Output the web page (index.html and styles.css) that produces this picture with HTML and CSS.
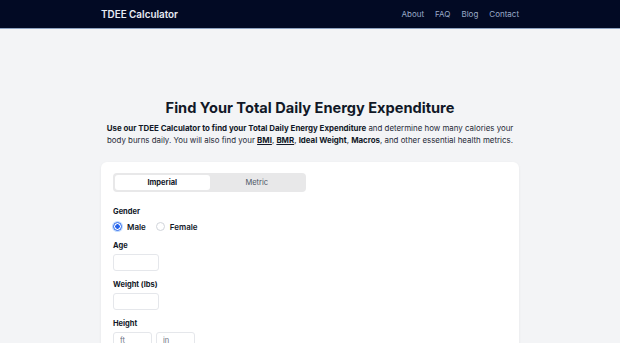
FILE: index.html
```html
<!doctype html>
<html lang="en">
  <head>
    <meta charset="UTF-8" />
    <meta name="viewport" content="width=device-width, initial-scale=1.0" />
    <title>TDEE Calculator</title>
    <link rel="stylesheet" href="styles.css">
  </head>
  <body>
    <nav class="navbar">
      <div class="nav-inner">
        <a class="brand" href="#">TDEE Calculator</a>
        <div class="nav-links">
          <a href="#">About</a>
          <a href="#">FAQ</a>
          <a href="#">Blog</a>
          <a href="#">Contact</a>
        </div>
      </div>
    </nav>

    <main class="container">
      <h1>Find Your Total Daily Energy Expenditure</h1>
      <p class="intro">
        <strong>Use our TDEE Calculator to find your Total Daily Energy Expenditure</strong>
        and determine how many calories your body burns daily. You will also find your
        <strong><u>BMI</u></strong>, <strong><u>BMR</u></strong>, <strong>Ideal Weight</strong>,
        <strong>Macros</strong>, and other essential health metrics.
      </p>

      <div class="card">
        <div class="units">
          <button class="unit active">Imperial</button>
          <button class="unit">Metric</button>
        </div>

        <div class="form-group first">
          <label>Gender</label>
          <div class="radios">
            <label class="radio"><span class="dot checked"></span>Male</label>
            <label class="radio"><span class="dot"></span>Female</label>
          </div>
        </div>

        <div class="form-group">
          <label for="age">Age</label>
          <input type="text" id="age" />
        </div>

        <div class="form-group">
          <label for="weight">Weight (lbs)</label>
          <input type="text" id="weight" />
        </div>

        <div class="form-group">
          <label>Height</label>
          <div class="height-row">
            <input type="text" class="small" placeholder="ft" />
            <input type="text" class="small" placeholder="in" />
          </div>
        </div>
      </div>
    </main>
  </body>
</html>
```

FILE: styles.css
```css
body {
  margin: 0;
  font-family: Inter, "Liberation Sans", sans-serif;
  background: #f3f4f6;
  color: #111827;
}
.navbar {
  background: #020a24;
  height: 28px;
  border-bottom: 1px solid #8da2c0;
}
.nav-inner {
  width: 418px;
  margin: 0 auto;
  height: 28px;
  display: flex;
  align-items: center;
  justify-content: space-between;
}
.brand {
  color: #e8ecf4;
  font-size: 9.9px;
  font-weight: 600;
  text-decoration: none;
}
.nav-links {
  display: flex;
  gap: 11px;
}
.nav-links a {
  color: #9aabc8;
  font-size: 8px;
  text-decoration: none;
}
.container {
  width: 418px;
  margin: 0 auto;
  padding-top: 70px;
}
h1 {
  margin: 0;
  text-align: center;
  font-size: 14.6px;
  line-height: 18px;
  font-weight: 700;
  color: #111827;
}
.intro {
  margin: 5px -4px 0;
  text-align: center;
  font-size: 7.9px;
  line-height: 12px;
  color: #1f2937;
}
.intro strong {
  color: #111827;
}
.card {
  margin-top: 16px;
  background: #fff;
  border-radius: 6px;
  box-shadow: 0 1px 3px rgba(0, 0, 0, 0.06);
  padding: 11px 12px;
}
.units {
  width: 189px;
  display: flex;
  background: #e8e8e9;
  border-radius: 4px;
  padding: 2px;
}
.unit {
  flex: 1;
  border: none;
  background: transparent;
  font-family: inherit;
  font-size: 7.5px;
  height: 15px;
  padding: 0;
  color: #4b5563;
  border-radius: 3px;
}
.unit.active {
  background: #fff;
  font-weight: 700;
  color: #111827;
}
.form-group {
  margin-top: 9px;
}
.form-group.first {
  margin-top: 15px;
}
.form-group > label {
  display: block;
  font-size: 7.5px;
  line-height: 9px;
  font-weight: 700;
  margin-bottom: 4px;
}
.radios {
  display: flex;
  gap: 10px;
  margin: 5px 0 1px;
  height: 11px;
}
.radio {
  display: flex;
  align-items: center;
  gap: 5px;
  font-size: 8px;
  font-weight: 600;
}
.dot {
  width: 7px;
  height: 7px;
  border: 1px solid #d1d5db;
  border-radius: 50%;
  background: #fff;
}
.dot.checked {
  border-color: #2563eb;
  background: radial-gradient(circle, #2563eb 0 2px, #fff 2.5px);
  box-shadow: 0 0 0 1px #bfdbfe;
}
input {
  display: block;
  width: 46px;
  height: 17px;
  box-sizing: border-box;
  border: 1px solid #e5e7eb;
  border-radius: 3px;
  font-family: inherit;
  font-size: 7.5px;
  padding: 0 6px;
}
input.small {
  width: 39px;
}
input::placeholder {
  color: #6b7280;
}
.height-row {
  display: flex;
  gap: 4px;
}
```
